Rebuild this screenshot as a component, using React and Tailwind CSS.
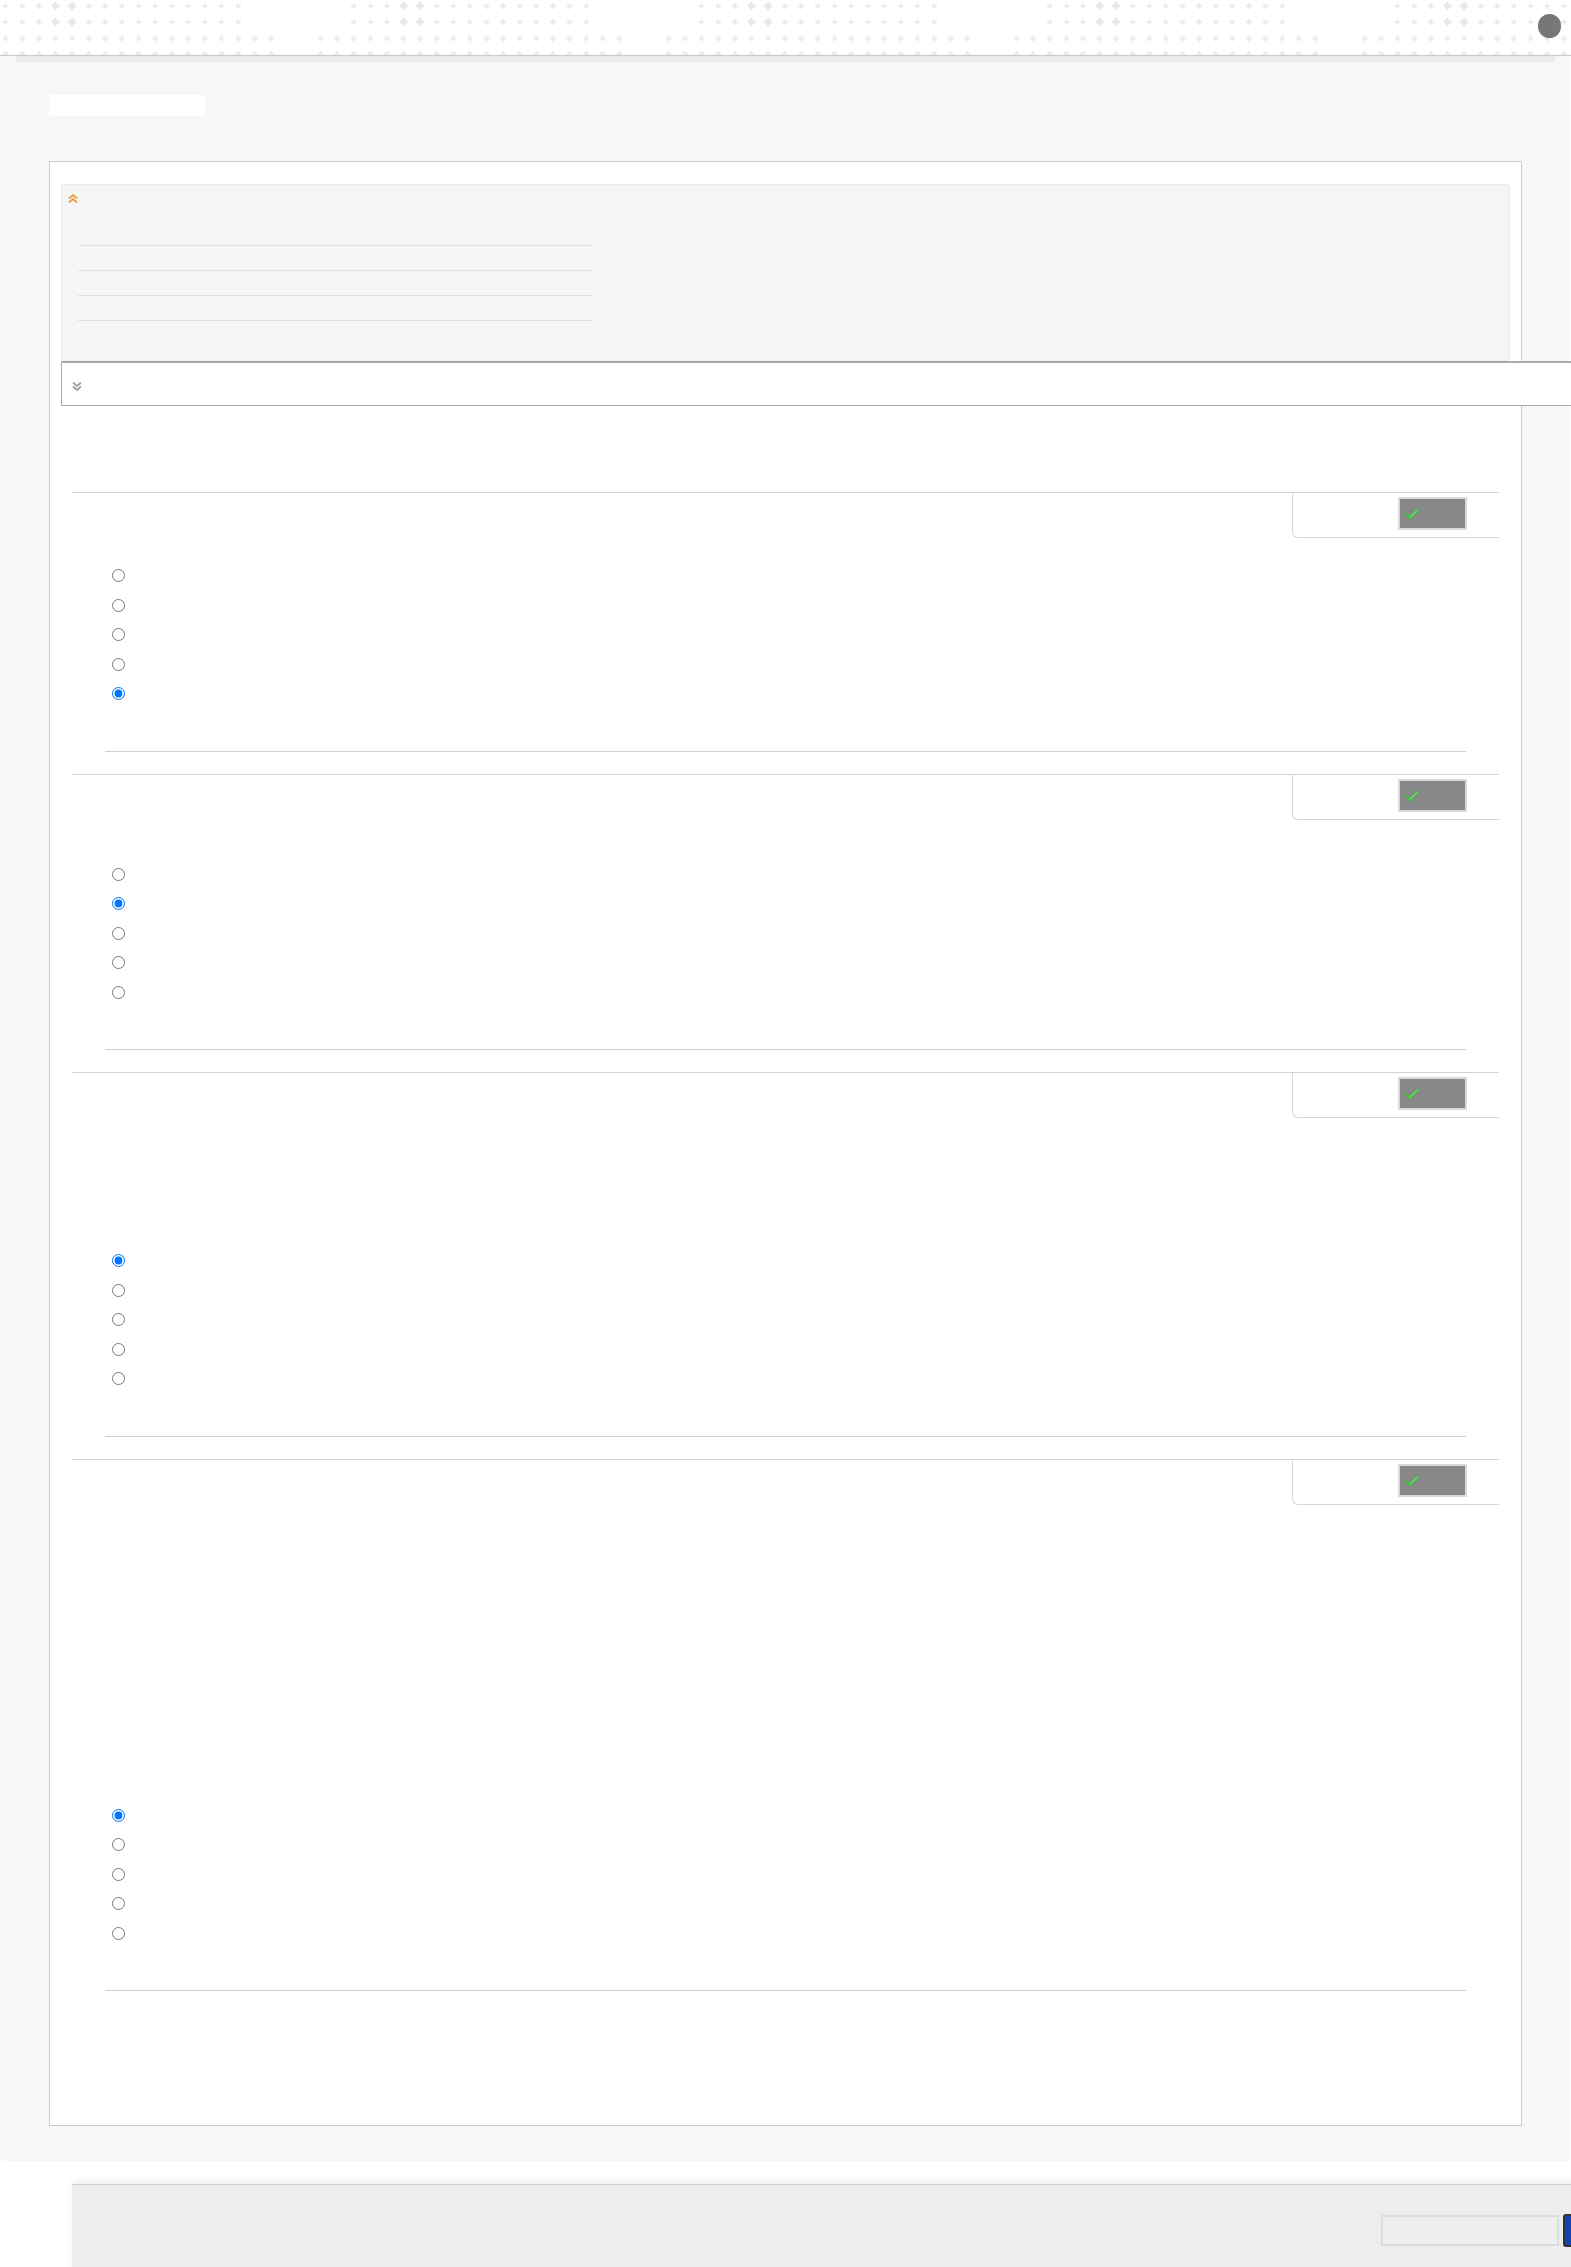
import React from "react";

// Repeating plus/diamond texture across the top strip.
const GROUPS = [0, 348, 696, 1044, 1392];
const STEP = 16.6;

function Plus({ x, y }) {
  return (
    <g fill="#ebebeb">
      <rect x={x - 3} y={y - 1} width="6" height="2" />
      <rect x={x - 1} y={y - 3} width="2" height="6" />
    </g>
  );
}

function HeaderPattern() {
  const items = [];
  GROUPS.forEach((x0) => {
    [6, 22].forEach((y) => {
      for (let k = 0; k <= 14; k++) {
        const x = x0 + 5.7 + STEP * k;
        if (k === 3 || k === 4) {
          items.push(
            <path
              key={`d${x0}-${y}-${k}`}
              d={`M${x} ${y - 5} Q${x + 1.5} ${y - 1.5} ${x + 5} ${y} Q${x + 1.5} ${y + 1.5} ${x} ${y + 5} Q${x - 1.5} ${y + 1.5} ${x - 5} ${y} Q${x - 1.5} ${y - 1.5} ${x} ${y - 5}Z`}
              fill="#e8e8e8"
            />
          );
        } else {
          items.push(<Plus key={`p${x0}-${y}-${k}`} x={x} y={y} />);
        }
      }
    });
    [38.5, 54].forEach((y) => {
      for (let k = -2; k <= 16; k++) {
        items.push(<Plus key={`b${x0}-${y}-${k}`} x={x0 + 5.7 + STEP * k} y={y} />);
      }
    });
  });
  return (
    <svg className="absolute inset-0" width="1571" height="55" viewBox="0 0 1571 55">
      {items}
    </svg>
  );
}

function Chevrons({ up, color }) {
  return (
    <svg width="10" height="9" viewBox="0 0 10 9" fill="none" stroke={color} strokeWidth="1.8">
      {up ? (
        <>
          <path d="M1 4.5 L5 1 L9 4.5" />
          <path d="M1 8.5 L5 5 L9 8.5" />
        </>
      ) : (
        <>
          <path d="M1 0.5 L5 4 L9 0.5" />
          <path d="M1 4.5 L5 8 L9 4.5" />
        </>
      )}
    </svg>
  );
}

function CheckButton() {
  return (
    <div className="w-[69px] h-[33px] border-2 border-[#d9d9d9] bg-[#888] pt-[9px] pl-[5px]">
      <svg width="14" height="12" viewBox="0 0 14 12" fill="none">
        <path d="M1.5 6.5 L5 10 L12.5 2" stroke="#3fc23f" strokeWidth="2.6" strokeLinecap="round" strokeLinejoin="round" />
        <path d="M5 9 L12 2.5" stroke="#a6f0a0" strokeWidth="0.8" strokeLinecap="round" />
      </svg>
    </div>
  );
}

const QUESTIONS = [
  { id: "q1", gap: "mt-[23px]", checked: 4 },
  { id: "q2", gap: "mt-[40px]", checked: 1 },
  { id: "q3", gap: "mt-[128px]", checked: 0 },
  { id: "q4", gap: "mt-[296px]", checked: 0 },
];

function Question({ q, first }) {
  return (
    <div className={`${first ? "mt-[86px]" : "mt-[22px]"} mx-[11px] border-t border-[#d4d4d4]`}>
      <div className="flex">
        <div className="flex-1" />
        <div className="w-[207px] h-[45px] border-l border-b border-[#d8d8d8] rounded-bl-[6px] pl-[105px] pt-[4px]">
          <CheckButton />
        </div>
      </div>
      <div className={q.gap}>
        {[0, 1, 2, 3, 4].map((i) => (
          <div key={i} className="h-[29.5px] flex items-center pl-[40px]">
            <input
              type="radio"
              name={q.id}
              defaultChecked={i === q.checked}
              className="m-0 w-[13px] h-[13px]"
            />
          </div>
        ))}
      </div>
      <div className="mt-[42px] mx-[33px] border-t border-[#cfcfcf]" />
    </div>
  );
}

export default function App() {
  return (
    <div className="w-[1571px] h-[2267px] overflow-hidden bg-white font-['Liberation_Sans',sans-serif]">
      <header className="relative h-[56px] border-b border-[#c9c9c9] bg-white">
        <HeaderPattern />
        <div className="relative flex justify-end pt-[14px] pr-[10px]">
          <div className="w-[23px] h-[24px] rounded-full bg-[#777]" />
        </div>
      </header>

      <main className="w-[1570px] bg-[#f7f7f7] rounded-b-[3px] pb-[35px]">
        <div className="ml-[16px] w-[1539px] h-[6px] bg-[#ebebeb]" />
        <div className="ml-[49px] mt-[33px] w-[156px] h-[21px] bg-white" />

        <section className="ml-[49px] mt-[45px] w-[1473px] border border-[#cbcbcb] bg-white pt-[22px] px-[11px] pb-[134px]">
          <div className="h-[177px] bg-[#f5f5f5] border border-[#ebebeb] rounded-[3px] pt-[9px] pl-[6px]">
            <Chevrons up color="#e2a443" />
            <div className="ml-[10px] mt-[42px] w-[513px] space-y-[24px]">
              {[0, 1, 2, 3].map((i) => (
                <div key={i} className="border-t border-dotted border-[#c8c8c8]" />
              ))}
            </div>
          </div>

          <div className="w-[1530px] h-[45px] bg-white border-t-2 border-l border-b border-[#aaa] pt-[19px] pl-[10px]">
            <Chevrons color="#a0a0a0" />
          </div>

          {QUESTIONS.map((q, i) => (
            <Question key={q.id} q={q} first={i === 0} />
          ))}
        </section>
      </main>

      <footer className="ml-[72px] mt-[23px] w-[1600px] h-[90px] bg-[#ededed] border-t border-[#cccccc] shadow-[0_-3px_6px_rgba(0,0,0,0.07)] pt-[30px] pl-[1309px] flex items-start">
        <div className="w-[178px] h-[31px] border-2 border-[#dcdcdc] bg-[#efefef]" />
        <div className="ml-[4px] w-[80px] h-[33px] -mt-[1px] border-2 border-[#333] rounded-[3px] bg-[#1643b3]" />
      </footer>
    </div>
  );
}
